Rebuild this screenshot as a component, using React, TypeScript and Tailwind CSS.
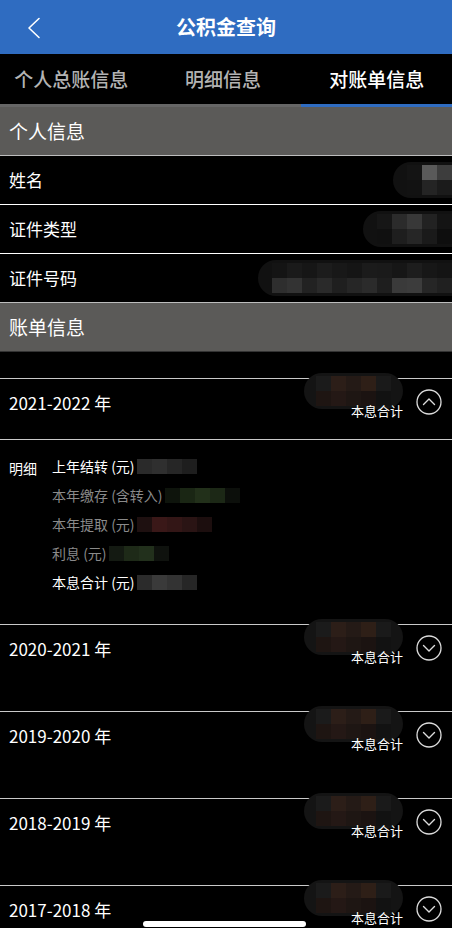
import React from 'react';

const font = { fontFamily: '"Noto Sans CJK SC", "Noto Sans", sans-serif' };

type Grid = string[][];

// pixelated redaction blocks drawn over the real values
function Mosaic({ cells, className = '' }: { cells: Grid; className?: string }) {
  return (
    <div className={`flex flex-col ${className}`}>
      {cells.map((row, i) => (
        <div key={i} className="flex">
          {row.map((c, j) => (
            <div key={j} className={`h-[15px] w-[15px] ${c}`} />
          ))}
        </div>
      ))}
    </div>
  );
}

const nameCells: Grid = [
  ['bg-[#141414]', 'bg-[#5a5a5a]', 'bg-[#3d3d3d]'],
  ['bg-[#121212]', 'bg-[#242424]', 'bg-[#1b1b1b]'],
];
const typeCells: Grid = [
  ['bg-[#161616]', 'bg-[#2b2b2b]', 'bg-[#383838]', 'bg-[#222222]', 'bg-[#141414]'],
  ['bg-[#101010]', 'bg-[#1e1e1e]', 'bg-[#262626]', 'bg-[#1a1a1a]', 'bg-[#0e0e0e]'],
];
const idCells: Grid = [
  ['bg-[#141414]', 'bg-[#1a1a1a]', 'bg-[#161616]', 'bg-[#1c1c1c]', 'bg-[#181818]', 'bg-[#151515]', 'bg-[#1b1b1b]', 'bg-[#1a1a1a]', 'bg-[#161616]', 'bg-[#1d1d1d]', 'bg-[#171717]', 'bg-[#141414]'],
  ['bg-[#2e2e2e]', 'bg-[#333333]', 'bg-[#222222]', 'bg-[#2a2a2a]', 'bg-[#1f1f1f]', 'bg-[#262626]', 'bg-[#2b2b2b]', 'bg-[#1e1e1e]', 'bg-[#3a3a3a]', 'bg-[#3c3c3c]', 'bg-[#262626]', 'bg-[#202020]'],
];
const billCells: Grid = [
  ['bg-[#1b1b1b]', 'bg-[#2c1e18]', 'bg-[#241a16]', 'bg-[#2e1f17]', 'bg-[#1a1a1a]'],
  ['bg-[#1e1512]', 'bg-[#241815]', 'bg-[#1e1613]', 'bg-[#1b1311]', 'bg-[#121212]'],
];

const detailCells: Grid[] = [
  [['bg-[#2a2a2a]', 'bg-[#2f2f2f]', 'bg-[#262626]', 'bg-[#1e1e1e]']],
  [['bg-[#0e140c]', 'bg-[#1a2614]', 'bg-[#22301a]', 'bg-[#1c2816]', 'bg-[#0c0f0b]']],
  [['bg-[#1e1010]', 'bg-[#3a1818]', 'bg-[#331616]', 'bg-[#2a1414]', 'bg-[#1c0e0e]']],
  [['bg-[#141a12]', 'bg-[#1e2a18]', 'bg-[#22301c]', 'bg-[#0f120e]']],
  [['bg-[#2b2b2b]', 'bg-[#3a3a3a]', 'bg-[#333333]', 'bg-[#262626]']],
];

function CircleChevron({ up }: { up?: boolean }) {
  return (
    <svg width="26" height="26" viewBox="0 0 26 26" fill="none">
      <circle cx="13" cy="13" r="12" stroke="#dcdcdc" strokeWidth="1.3" />
      {up ? (
        <polyline points="7.5,15.5 13,10 18.5,15.5" stroke="#dcdcdc" strokeWidth="1.4" strokeLinecap="round" strokeLinejoin="round" />
      ) : (
        <polyline points="7.5,10.5 13,16 18.5,10.5" stroke="#dcdcdc" strokeWidth="1.4" strokeLinecap="round" strokeLinejoin="round" />
      )}
    </svg>
  );
}

function InfoRow({ label, cells, border = 'border-white' }: { label: string; cells: Grid; border?: string }) {
  return (
    <div className={`flex h-[49px] items-center border-b ${border} pl-[9px]`}>
      <span className="text-[17px] text-white">{label}</span>
      <div className="ml-auto rounded-l-[18px] bg-[#111111] py-[3px] pl-[14px]">
        <Mosaic cells={cells} />
      </div>
    </div>
  );
}

function BillRow({ year, open }: { year: string; open?: boolean }) {
  return (
    <div className="border-t border-[#c9c9c9]">
      <div className="flex h-[60px] items-start pl-[9px] pr-[10px]">
        <span className="mt-[12px] text-[17px] leading-[24px] text-white">{year}</span>
        <div className="ml-auto flex flex-col items-end">
          <div className="-mt-[6px] rounded-[18px] bg-[#141414] px-[12px] py-[3px]">
            <Mosaic cells={billCells} />
          </div>
          <span className="-mt-[6px] text-[13px] leading-[16px] text-white">本息合计</span>
        </div>
        <div className="ml-[13px] mt-[10px]">
          <CircleChevron up={open} />
        </div>
      </div>
      {!open && <div className="h-[26px]" />}
    </div>
  );
}

const details = [
  { label: '上年结转 (元)', color: 'text-white' },
  { label: '本年缴存 (含转入)', color: 'text-[#8a8a8a]' },
  { label: '本年提取 (元)', color: 'text-[#8a8a8a]' },
  { label: '利息 (元)', color: 'text-[#8a8a8a]' },
  { label: '本息合计 (元)', color: 'text-white' },
];

export default function App() {
  return (
    <div className="relative h-[928px] w-[452px] overflow-hidden bg-black" style={font}>
      {/* title bar */}
      <div className="relative flex h-[54px] items-center justify-center bg-[#2f6cc1]">
        <svg className="absolute left-[26px] top-[17px]" width="16" height="22" viewBox="0 0 16 22" fill="none">
          <polyline points="13,1.5 3,11 13,20.5" stroke="white" strokeWidth="1.6" strokeLinecap="round" strokeLinejoin="round" />
        </svg>
        <span className="text-[20px] font-bold text-white">公积金查询</span>
      </div>

      {/* tabs */}
      <div className="grid h-[50px] grid-cols-3 items-center text-[19px] font-medium">
        <span className="pr-[8px] text-center text-[#b3b3b3]">个人总账信息</span>
        <span className="pr-[6px] text-center text-[#b3b3b3]">明细信息</span>
        <span className="text-center text-white">对账单信息</span>
      </div>
      <div className="grid h-[3px] grid-cols-3">
        <div className="col-span-2 bg-[#666666]" />
        <div className="bg-[#2f6cc1]" />
      </div>

      {/* personal info */}
      <div className="flex h-[49px] items-center border-b border-[#bdbdbd] bg-[#5b5a58] pl-[9px] text-[19px] text-white">
        个人信息
      </div>
      <InfoRow label="姓名" cells={nameCells} />
      <InfoRow label="证件类型" cells={typeCells} />
      <InfoRow label="证件号码" cells={idCells} border="border-[#bdbdbd]" />

      {/* bill info */}
      <div className="flex h-[49px] items-center border-b border-[#333333] bg-[#5b5a58] pl-[9px] text-[19px] text-white">
        账单信息
      </div>
      <div className="h-[26px]" />

      <BillRow year="2021-2022 年" open />
      <div className="flex h-[185px] border-t border-[#c9c9c9] pl-[9px] pt-[12px]">
        <span className="mt-[2px] text-[14px] leading-[29px] text-white">明细</span>
        <div className="ml-[15px] flex flex-col">
          {details.map((d, i) => (
            <div key={d.label} className="flex h-[29px] items-center">
              <span className={`text-[14px] ${d.color}`}>{d.label}</span>
              <Mosaic cells={detailCells[i]} className="ml-[2px]" />
            </div>
          ))}
        </div>
      </div>
      <BillRow year="2020-2021 年" />
      <BillRow year="2019-2020 年" />
      <BillRow year="2018-2019 年" />
      <BillRow year="2017-2018 年" />

      {/* home indicator */}
      <div className="absolute bottom-[1px] left-[143px] h-[6px] w-[163px] rounded-full bg-white" />
    </div>
  );
}
